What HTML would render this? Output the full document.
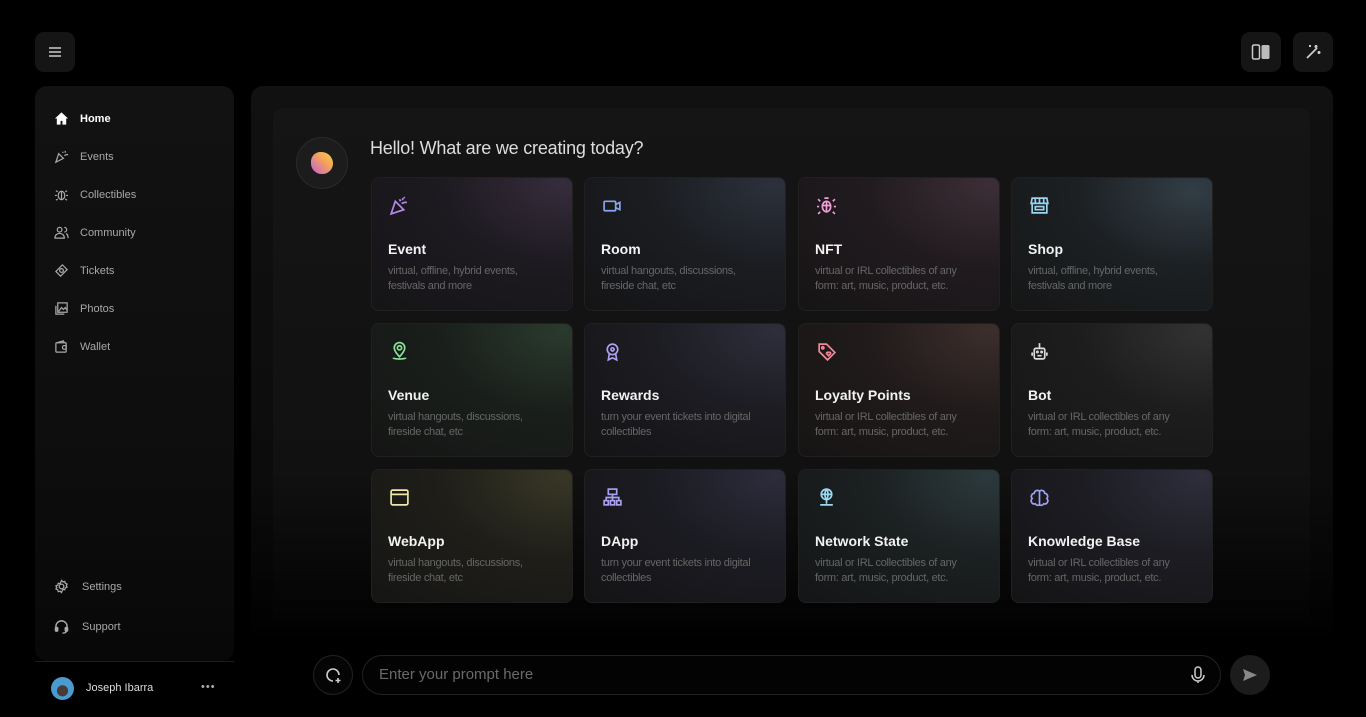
<!DOCTYPE html>
<html><head><meta charset="utf-8"><style>
*{box-sizing:border-box;margin:0;padding:0}
body{width:1366px;height:717px;background:#000;font-family:"Liberation Sans",sans-serif;position:relative;overflow:hidden;color:#ddd}
.abs{position:absolute}
.btn{position:absolute;width:40px;height:40px;border-radius:9px;background:#151515;display:flex;align-items:center;justify-content:center}
.side{left:35px;top:86px;width:199px;height:575px;border-radius:12px;background:linear-gradient(180deg,#121212 0%,#0e0e0e 60%,#080808 100%)}
.nav{position:absolute;left:54px;font-size:11px;color:#a8a8a8;display:flex;align-items:center;gap:11px}
.nav svg{width:15px;height:15px}
.main{left:251px;top:86px;width:1082px;height:560px;border-radius:12px;background:linear-gradient(180deg,#111 0%,#0c0c0c 70%,#000 100%)}
.inner{left:273px;top:108px;width:1037px;height:520px;border-radius:10px;background:linear-gradient(180deg,#151515 0%,#111 70%,#020202 100%)}
.card{position:absolute;width:202px;height:134px;border-radius:8px;border:1px solid #202020;overflow:hidden}
.card svg{position:absolute;left:17px;top:17px;width:21px;height:21px}
.card h3{position:absolute;left:16px;top:63px;font-size:14px;font-weight:bold;color:#f2f2f2}
.card p{position:absolute;left:16px;top:86px;font-size:11px;line-height:15px;color:#666;width:160px;letter-spacing:-0.3px}
</style></head><body>
<div class="btn" style="left:35px;top:32px"><svg width="16" height="16" viewBox="0 0 16 16" stroke="#ccc" stroke-width="1.5"><path d="M2 4h12M2 8h12M2 12h12"/></svg></div>
<div class="btn" style="left:1241px;top:32px"><svg width="20" height="18" viewBox="0 0 20 18"><rect x="1.5" y="2" width="7" height="14" rx="1.5" fill="none" stroke="#ccc" stroke-width="1.5"/><rect x="10.5" y="2" width="8" height="14" rx="1.5" fill="#bbb"/></svg></div>
<div class="btn" style="left:1293px;top:32px"><svg width="18" height="18" viewBox="0 0 18 18" stroke="#ccc" stroke-width="1.8" fill="none"><path d="M3 15L13 5"/><path d="M12 2v3M10.5 3.5h3M15 8v3M13.5 9.5h3M6 2v2M5 3h2"/></svg></div>

<div class="abs side"></div>
<div class="nav" style="top:111px;color:#fff;font-weight:bold"><svg viewBox="0 0 16 16"><path d="M8 1.5L1 8h2v6.5h4v-4h2v4h4V8h2z" fill="#fff"/></svg>Home</div>
<div class="nav" style="top:149px"><svg viewBox="0 0 16 16" fill="none" stroke="#aaa" stroke-width="1.3"><path d="M2 14l3-9 5 5z"/><path d="M9 3l1 1M12 2v2M13 6h2M11 7l2-1"/></svg>Events</div>
<div class="nav" style="top:187px"><svg viewBox="0 0 16 16" fill="none" stroke="#aaa" stroke-width="1.3"><ellipse cx="8" cy="9" rx="3.5" ry="4.5"/><path d="M8 5v8M1 9h2M13 9h2M2 4l2 1M14 4l-2 1M2 14l2-1M14 14l-2-1"/></svg>Collectibles</div>
<div class="nav" style="top:225px"><svg viewBox="0 0 16 16" fill="none" stroke="#aaa" stroke-width="1.3"><circle cx="6" cy="5" r="2.5"/><path d="M1 14c0-3 2-5 5-5s5 2 5 5zM11 2.5a2.5 2.5 0 010 5M13 9c1.5 1 2 2.5 2 5"/></svg>Community</div>
<div class="nav" style="top:263px"><svg viewBox="0 0 16 16" fill="none" stroke="#aaa" stroke-width="1.3"><path d="M9 2l5 5-7 7-5-5z"/><circle cx="8" cy="8" r="2"/></svg>Tickets</div>
<div class="nav" style="top:301px"><svg viewBox="0 0 16 16" fill="none" stroke="#aaa" stroke-width="1.3"><rect x="4" y="2" width="10" height="10"/><path d="M2 5v9h9M5 11l3-4 2 2 2-2 2 3"/></svg>Photos</div>
<div class="nav" style="top:339px"><svg viewBox="0 0 16 16" fill="none" stroke="#aaa" stroke-width="1.3"><rect x="2" y="4" width="11" height="10" rx="1"/><path d="M3 4l7-2 1 2"/><circle cx="11" cy="9" r="2"/></svg>Wallet</div>
<div class="nav" style="top:579px;gap:13px"><svg viewBox="0 0 16 16" fill="none" stroke="#aaa" stroke-width="1.3"><circle cx="8" cy="8" r="2.5"/><path d="M8 1.5l1.5 1.5 2-.5.5 2 2 1-1 1.5 1 1.5-2 1-.5 2-2-.5L8 14.5 6.5 13l-2 .5-.5-2-2-1 1-1.5-1-1.5 2-1 .5-2 2 .5z"/></svg>Settings</div>
<div class="nav" style="top:619px;gap:13px"><svg viewBox="0 0 16 16" fill="none" stroke="#aaa" stroke-width="1.5"><path d="M2 10V8a6 6 0 0112 0v2"/><rect x="1.5" y="9" width="2.5" height="4" rx="1" fill="#aaa"/><rect x="12" y="9" width="2.5" height="4" rx="1" fill="#aaa"/><path d="M13 13c0 1.5-2 2-4 2"/></svg>Support</div>
<div class="abs" style="left:35px;top:661px;width:199px;height:1px;background:#1c1c1c"></div>
<div class="abs" style="left:51px;top:677px;width:23px;height:23px;border-radius:50%;background:radial-gradient(circle at 50% 60%,#4a3a36 0 30%,#4a9bd0 32%)"></div>
<div class="abs" style="left:86px;top:682px;font-size:11px;color:#ddd">Joseph Ibarra</div>
<div class="abs" style="left:201px;top:681px;font-size:11px;color:#aaa;letter-spacing:1px">•••</div>

<div class="abs main"></div>
<div class="abs inner"></div>
<div class="abs" style="left:296px;top:137px;width:52px;height:52px;border-radius:50%;background:#1c1c1c;border:1px solid #2a2a2a"></div>
<div class="abs" style="left:311px;top:152px;width:22px;height:22px;border-radius:45% 55% 50% 50%;background:linear-gradient(45deg,#c25fd6,#f5a35a 60%,#f4d24a)"></div>
<div class="abs" style="left:370px;top:138px;font-size:18px;color:#ddd;letter-spacing:-0.2px">Hello! What are we creating today?</div>

<div class="card" style="left:371px;top:177px;background:radial-gradient(ellipse at 95% 5%,#362c3c 0%,#1d1a20 45%,#151416 100%)"><svg viewBox="0 0 20 20" fill="none" stroke="#b38be8" stroke-width="1.6"><path d="M2 18l4-12 8 8z"/><path d="M10 4l1 2M13 3v2M15 7h2M12 8l3-1M14 2l1 1"/></svg><h3>Event</h3><p>virtual, offline, hybrid events, festivals and more</p></div>
<div class="card" style="left:584px;top:177px;background:radial-gradient(ellipse at 95% 5%,#2c313c 0%,#1b1d21 45%,#141416 100%)"><svg viewBox="0 0 20 20" fill="none" stroke="#8aa4f0" stroke-width="1.6"><rect x="2" y="6" width="11" height="9" rx="1"/><path d="M13 9l4-2v7l-4-2"/></svg><h3>Room</h3><p>virtual hangouts, discussions, fireside chat, etc</p></div>
<div class="card" style="left:798px;top:177px;background:radial-gradient(ellipse at 95% 5%,#3c2e36 0%,#211b1f 45%,#161415 100%)"><svg viewBox="0 0 20 20" fill="none" stroke="#f0a0d8" stroke-width="1.6"><ellipse cx="10" cy="11" rx="4" ry="5"/><path d="M10 6v10M6 10h8M1 11h2M17 11h2M2 4l2 2M18 4l-2 2M2 18l2-2M18 18l-2-2M8 3h4"/></svg><h3>NFT</h3><p>virtual or IRL collectibles of any form: art, music, product, etc.</p></div>
<div class="card" style="left:1011px;top:177px;background:radial-gradient(ellipse at 90% 10%,#323d45 0%,#1c2023 45%,#151616 100%)"><svg viewBox="0 0 20 20" fill="none" stroke="#9cd4f0" stroke-width="1.6"><path d="M3 3h14l1 5H2z"/><path d="M6 3v5M10 3v5M14 3v5M3 8v9h14V8M6 11h8v3H6z"/></svg><h3>Shop</h3><p>virtual, offline, hybrid events, festivals and more</p></div>

<div class="card" style="left:371px;top:323px;background:radial-gradient(ellipse at 95% 5%,#2a3a2e 0%,#1a1f1b 45%,#141514 100%)"><svg viewBox="0 0 20 20" fill="none" stroke="#8be09a" stroke-width="1.6"><path d="M10 15s-5-5-5-8.5a5 5 0 0110 0C15 10 10 15 10 15z"/><circle cx="10" cy="6.5" r="2"/><path d="M4 16c0 1.5 12 1.5 12 0"/></svg><h3>Venue</h3><p>virtual hangouts, discussions, fireside chat, etc</p></div>
<div class="card" style="left:584px;top:323px;background:radial-gradient(ellipse at 95% 5%,#2e2e3c 0%,#1c1c22 45%,#141416 100%)"><svg viewBox="0 0 20 20" fill="none" stroke="#b0a0f0" stroke-width="1.6"><circle cx="10" cy="8" r="5"/><circle cx="10" cy="8" r="1.5"/><path d="M7 12l-1 6 4-2 4 2-1-6"/></svg><h3>Rewards</h3><p>turn your event tickets into digital collectibles</p></div>
<div class="card" style="left:798px;top:323px;background:radial-gradient(ellipse at 95% 5%,#3c2e2c 0%,#211b1b 45%,#161414 100%)"><svg viewBox="0 0 20 20" fill="none" stroke="#f0889a" stroke-width="1.6"><path d="M3 3h7l8 8-7 7-8-8z"/><circle cx="6.5" cy="6.5" r="1"/><path d="M10 12l2 2 2-2a1.2 1.2 0 00-2-1 1.2 1.2 0 00-2 1z"/></svg><h3>Loyalty Points</h3><p>virtual or IRL collectibles of any form: art, music, product, etc.</p></div>
<div class="card" style="left:1011px;top:323px;background:radial-gradient(ellipse at 95% 5%,#323232 0%,#1d1d1d 45%,#151515 100%)"><svg viewBox="0 0 20 20" fill="none" stroke="#ddd" stroke-width="1.6"><rect x="5" y="7" width="10" height="10" rx="1.5"/><path d="M10 2v5M3 11v3M17 11v3M8 14h4"/><circle cx="8" cy="10.5" r=".6"/><circle cx="12" cy="10.5" r=".6"/></svg><h3>Bot</h3><p>virtual or IRL collectibles of any form: art, music, product, etc.</p></div>

<div class="card" style="left:371px;top:469px;background:radial-gradient(ellipse at 95% 5%,#383726 0%,#1f1e19 45%,#151514 100%)"><svg viewBox="0 0 20 20" fill="none" stroke="#f0e8a8" stroke-width="1.6"><rect x="2" y="3" width="16" height="14" rx="1.5"/><path d="M2 7h16"/></svg><h3>WebApp</h3><p>virtual hangouts, discussions, fireside chat, etc</p></div>
<div class="card" style="left:584px;top:469px;background:radial-gradient(ellipse at 95% 5%,#2c2c3c 0%,#1b1b22 45%,#141416 100%)"><svg viewBox="0 0 20 20" fill="none" stroke="#a8a0f0" stroke-width="1.6"><rect x="6" y="2" width="8" height="5"/><path d="M10 7v3M4 13v-3h12v3M10 10v3"/><rect x="2" y="13" width="4" height="4"/><rect x="8" y="13" width="4" height="4"/><rect x="14" y="13" width="4" height="4"/></svg><h3>DApp</h3><p>turn your event tickets into digital collectibles</p></div>
<div class="card" style="left:798px;top:469px;background:radial-gradient(ellipse at 95% 5%,#2c393c 0%,#1b2021 45%,#141516 100%)"><svg viewBox="0 0 20 20" fill="none" stroke="#9cd8f0" stroke-width="1.6"><circle cx="10" cy="7" r="5"/><path d="M5 7h10M10 2c-2 3-2 7 0 10M10 2c2 3 2 7 0 10M10 12v4M4 17h12"/></svg><h3>Network State</h3><p>virtual or IRL collectibles of any form: art, music, product, etc.</p></div>
<div class="card" style="left:1011px;top:469px;background:radial-gradient(ellipse at 95% 5%,#2e2e3c 0%,#1c1c22 45%,#141416 100%)"><svg viewBox="0 0 20 20" fill="none" stroke="#a0a0f8" stroke-width="1.6"><path d="M10 4a3 3 0 015 2 3 3 0 012 5 3 3 0 01-3 5 3 3 0 01-4 1 3 3 0 01-4-1 3 3 0 01-3-5 3 3 0 012-5 3 3 0 015-2zM10 4v13"/></svg><h3>Knowledge Base</h3><p>virtual or IRL collectibles of any form: art, music, product, etc.</p></div>

<div class="abs" style="left:313px;top:655px;width:40px;height:40px;border-radius:50%;border:1px solid #222;background:#050505;display:flex;align-items:center;justify-content:center"><svg width="18" height="18" viewBox="0 0 18 18" fill="none" stroke="#ccc" stroke-width="1.6"><path d="M15 9a6 6 0 10-6 6"/><path d="M14 12v5M11.5 14.5h5"/></svg></div>
<div class="abs" style="left:362px;top:655px;width:859px;height:40px;border-radius:20px;border:1px solid #222;background:#030303"></div>
<div class="abs" style="left:379px;top:666px;font-size:15px;color:#6a6a6a">Enter your prompt here</div>
<svg class="abs" style="left:1190px;top:666px" width="16" height="18" viewBox="0 0 16 18" fill="none" stroke="#ccc" stroke-width="1.5"><rect x="5" y="1" width="6" height="11" rx="3"/><path d="M2 9a6 6 0 0012 0M8 15v2"/></svg>
<div class="abs" style="left:1230px;top:655px;width:40px;height:40px;border-radius:50%;background:#1c1c1c;display:flex;align-items:center;justify-content:center"><svg width="16" height="16" viewBox="0 0 16 16"><path d="M1 2l14 6-14 6 2-6z" fill="#888"/></svg></div>
</body></html>
